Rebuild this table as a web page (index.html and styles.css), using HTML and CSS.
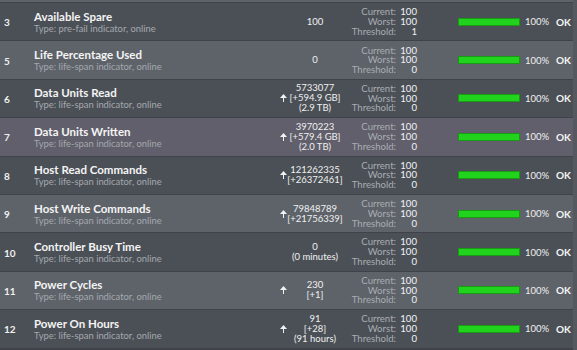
FILE: index.html
```html
<!DOCTYPE html>
<html>
<head>
<meta charset="utf-8">
<link rel="stylesheet" href="styles.css">
</head>
<body>
<div class="table">
  <div class="topstrip"></div>

  <div class="row dark">
    <div class="id">3</div>
    <div class="name"><div class="title">Available Spare</div><div class="type">Type: pre-fail indicator, online</div></div>
    <div class="arrow"></div>
    <div class="raw">100</div>
    <div class="labels"><span>Current:</span><span>Worst:</span><span>Threshold:</span></div>
    <div class="vals"><span>100</span><span>100</span><span>1</span></div>
    <div class="barcell"><div class="bar"></div></div>
    <div class="pct">100%</div>
    <div class="status">OK</div>
  </div>

  <div class="row light">
    <div class="id">5</div>
    <div class="name"><div class="title">Life Percentage Used</div><div class="type">Type: life-span indicator, online</div></div>
    <div class="arrow"></div>
    <div class="raw">0</div>
    <div class="labels"><span>Current:</span><span>Worst:</span><span>Threshold:</span></div>
    <div class="vals"><span>100</span><span>100</span><span>0</span></div>
    <div class="barcell"><div class="bar"></div></div>
    <div class="pct">100%</div>
    <div class="status">OK</div>
  </div>

  <div class="row dark">
    <div class="id">6</div>
    <div class="name"><div class="title">Data Units Read</div><div class="type">Type: life-span indicator, online</div></div>
    <div class="arrow"><svg width="7" height="8" viewBox="0 0 7 8"><path d="M3.5 0 L7 4 L4 4 L4 8 L3 8 L3 4 L0 4 Z" fill="#f2f2f2"/></svg></div>
    <div class="raw"><span>5733077</span><span>[+594.9 GB]</span><span>(2.9 TB)</span></div>
    <div class="labels"><span>Current:</span><span>Worst:</span><span>Threshold:</span></div>
    <div class="vals"><span>100</span><span>100</span><span>0</span></div>
    <div class="barcell"><div class="bar"></div></div>
    <div class="pct">100%</div>
    <div class="status">OK</div>
  </div>

  <div class="row sel">
    <div class="id">7</div>
    <div class="name"><div class="title">Data Units Written</div><div class="type">Type: life-span indicator, online</div></div>
    <div class="arrow"><svg width="7" height="8" viewBox="0 0 7 8"><path d="M3.5 0 L7 4 L4 4 L4 8 L3 8 L3 4 L0 4 Z" fill="#f2f2f2"/></svg></div>
    <div class="raw"><span>3970223</span><span>[+579.4 GB]</span><span>(2.0 TB)</span></div>
    <div class="labels"><span>Current:</span><span>Worst:</span><span>Threshold:</span></div>
    <div class="vals"><span>100</span><span>100</span><span>0</span></div>
    <div class="barcell"><div class="bar"></div></div>
    <div class="pct">100%</div>
    <div class="status">OK</div>
  </div>

  <div class="row dark">
    <div class="id">8</div>
    <div class="name"><div class="title">Host Read Commands</div><div class="type">Type: life-span indicator, online</div></div>
    <div class="arrow"><svg width="7" height="8" viewBox="0 0 7 8"><path d="M3.5 0 L7 4 L4 4 L4 8 L3 8 L3 4 L0 4 Z" fill="#f2f2f2"/></svg></div>
    <div class="raw"><span>121262335</span><span>[+26372461]</span></div>
    <div class="labels"><span>Current:</span><span>Worst:</span><span>Threshold:</span></div>
    <div class="vals"><span>100</span><span>100</span><span>0</span></div>
    <div class="barcell"><div class="bar"></div></div>
    <div class="pct">100%</div>
    <div class="status">OK</div>
  </div>

  <div class="row light">
    <div class="id">9</div>
    <div class="name"><div class="title">Host Write Commands</div><div class="type">Type: life-span indicator, online</div></div>
    <div class="arrow"><svg width="7" height="8" viewBox="0 0 7 8"><path d="M3.5 0 L7 4 L4 4 L4 8 L3 8 L3 4 L0 4 Z" fill="#f2f2f2"/></svg></div>
    <div class="raw"><span>79848789</span><span>[+21756339]</span></div>
    <div class="labels"><span>Current:</span><span>Worst:</span><span>Threshold:</span></div>
    <div class="vals"><span>100</span><span>100</span><span>0</span></div>
    <div class="barcell"><div class="bar"></div></div>
    <div class="pct">100%</div>
    <div class="status">OK</div>
  </div>

  <div class="row dark">
    <div class="id">10</div>
    <div class="name"><div class="title">Controller Busy Time</div><div class="type">Type: life-span indicator, online</div></div>
    <div class="arrow"></div>
    <div class="raw"><span>0</span><span>(0 minutes)</span></div>
    <div class="labels"><span>Current:</span><span>Worst:</span><span>Threshold:</span></div>
    <div class="vals"><span>100</span><span>100</span><span>0</span></div>
    <div class="barcell"><div class="bar"></div></div>
    <div class="pct">100%</div>
    <div class="status">OK</div>
  </div>

  <div class="row light">
    <div class="id">11</div>
    <div class="name"><div class="title">Power Cycles</div><div class="type">Type: life-span indicator, online</div></div>
    <div class="arrow"><svg width="7" height="8" viewBox="0 0 7 8"><path d="M3.5 0 L7 4 L4 4 L4 8 L3 8 L3 4 L0 4 Z" fill="#f2f2f2"/></svg></div>
    <div class="raw"><span>230</span><span>[+1]</span></div>
    <div class="labels"><span>Current:</span><span>Worst:</span><span>Threshold:</span></div>
    <div class="vals"><span>100</span><span>100</span><span>0</span></div>
    <div class="barcell"><div class="bar"></div></div>
    <div class="pct">100%</div>
    <div class="status">OK</div>
  </div>

  <div class="row dark">
    <div class="id">12</div>
    <div class="name"><div class="title">Power On Hours</div><div class="type">Type: life-span indicator, online</div></div>
    <div class="arrow"><svg width="7" height="8" viewBox="0 0 7 8"><path d="M3.5 0 L7 4 L4 4 L4 8 L3 8 L3 4 L0 4 Z" fill="#f2f2f2"/></svg></div>
    <div class="raw"><span>91</span><span>[+28]</span><span>(91 hours)</span></div>
    <div class="labels"><span>Current:</span><span>Worst:</span><span>Threshold:</span></div>
    <div class="vals"><span>100</span><span>100</span><span>0</span></div>
    <div class="barcell"><div class="bar"></div></div>
    <div class="pct">100%</div>
    <div class="status">OK</div>
  </div>
</div>
</body>
</html>
```

FILE: styles.css
```css
html, body {
  margin: 0;
  padding: 0;
  background: #3f4349;
  overflow: hidden;
}
body {
  font-family: "Lato", "DejaVu Sans", sans-serif;
  color: #f0f0f0;
  width: 577px;
  height: 350px;
}
.table {
  display: flex;
  flex-direction: column;
  background: #3f4349;
  border-right: 4px solid #55595f;
  width: 573px;
  height: 350px;
}
.topstrip {
  height: 2px;
  background: #5e6369;
  border-bottom: 1px solid #3f4349;
  flex-shrink: 0;
}
.row {
  display: grid;
  grid-template-columns: 34px 242px 14px 50px 56px 21px 103px 31px 22px;
  align-items: center;
  height: 37.4px;
  border-bottom: 1px solid #3f4349;
  flex-shrink: 0;
}
.dark { background: #4b5057; }
.light { background: #5e636a; }
.sel { background: #615f6b; }
.id {
  padding-left: 4px;
  font-weight: bold;
  font-size: 10px;
  padding-top: 1px;
}
.name {
  display: flex;
  flex-direction: column;
  padding-top: 1px;
  white-space: nowrap;
}
.title {
  font-weight: bold;
  font-size: 11.5px;
  line-height: 12px;
  color: #f4f4f4;
}
.type {
  font-size: 9.4px;
  line-height: 11px;
  color: #a4a8ad;
}
.arrow {
  display: flex;
  justify-content: center;
  align-items: center;
}
.arrow svg { display: block; }
.raw {
  display: flex;
  flex-direction: column;
  align-items: center;
  font-size: 9.5px;
  line-height: 10px;
  color: #f0f0f0;
  white-space: nowrap;
}
.labels, .vals {
  display: flex;
  flex-direction: column;
  align-items: flex-end;
  font-size: 9.6px;
  line-height: 9.7px;
  white-space: nowrap;
}
.labels { color: #a9adb2; }
.vals { color: #f2f2f2; }
.barcell {
  display: flex;
  justify-content: flex-end;
}
.bar {
  width: 60px;
  height: 6px;
  background: #22d31e;
  border: 1px solid #189a14;
}
.pct {
  padding-left: 5px;
  font-size: 9.5px;
  color: #f0f0f0;
  white-space: nowrap;
}
.status {
  padding-left: 5px;
  font-weight: bold;
  font-size: 10px;
  color: #f4f4f4;
}
```
